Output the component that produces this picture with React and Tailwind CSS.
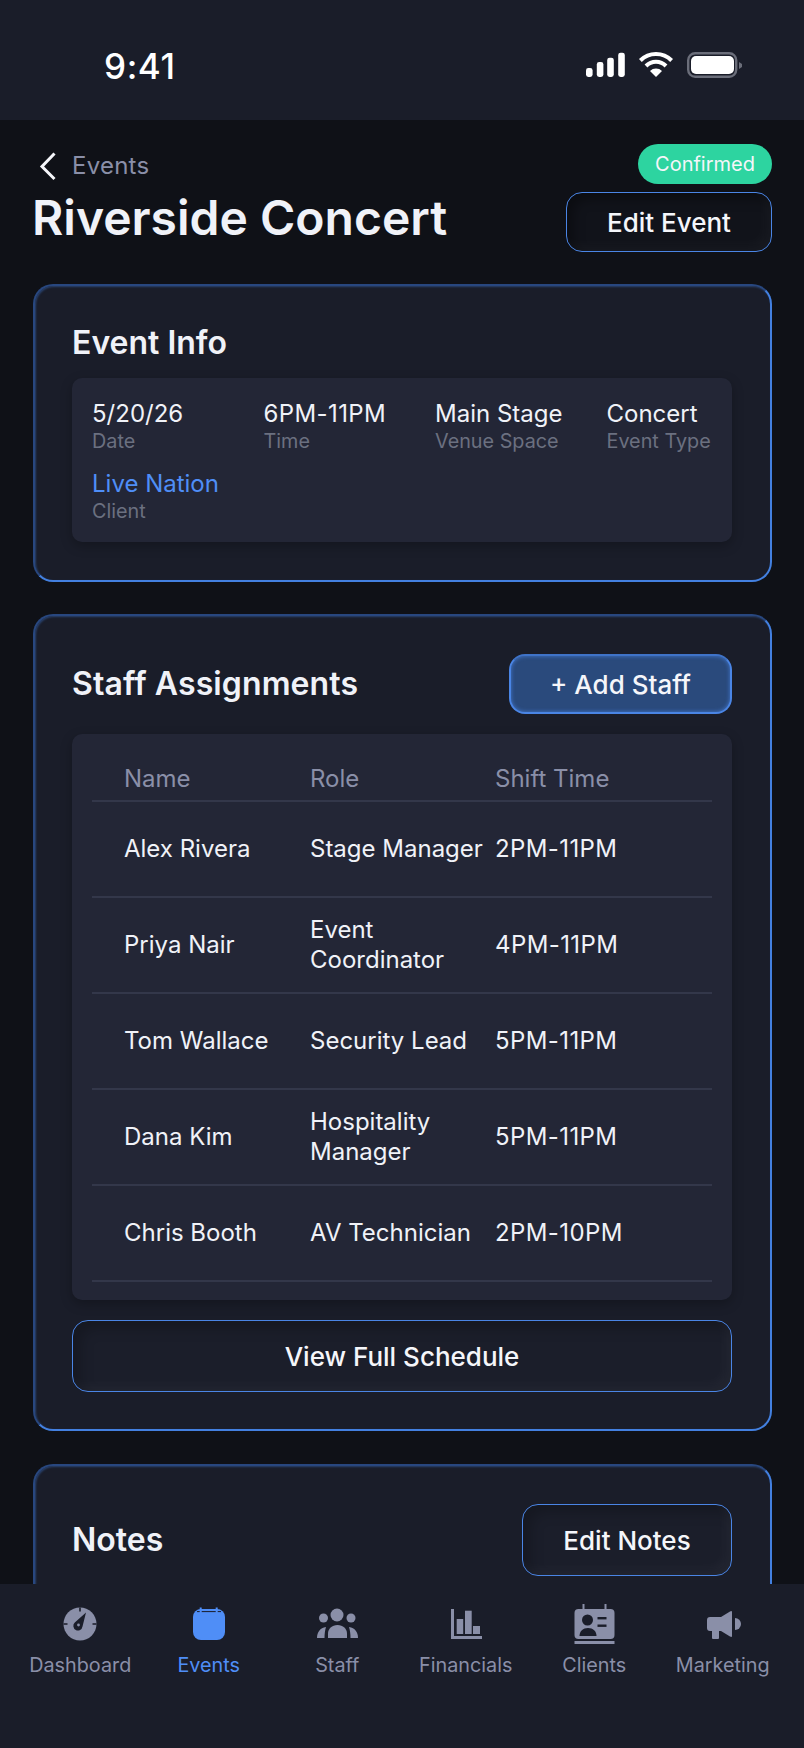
const Value = ({ v, l, blue, time }) => (
  <div>
    <div className={`pt-[1px] text-2xl leading-[29px] ${time ? "tracking-[0.4px]" : ""} ${blue ? "text-[#4f8ef7]" : "text-[#f0f2f8]"}`}>{v}</div>
    <div className="text-[19.8px] leading-[26px] text-[#6b7080]">{l}</div>
  </div>
);

const rows = [
  ["Alex Rivera", "Stage Manager", "2PM-11PM"],
  ["Priya Nair", "Event Coordinator", "4PM-11PM"],
  ["Tom Wallace", "Security Lead", "5PM-11PM"],
  ["Dana Kim", "Hospitality Manager", "5PM-11PM"],
  ["Chris Booth", "AV Technician", "2PM-10PM"],
];

const cardCls =
  "rounded-[20px] border-2 border-[#4380e0] border-t-[#28477f] border-l-[#28477f] bg-[#1a1d29] pl-[37px] pr-[38px] shadow-[inset_1px_1px_2px_rgba(60,110,190,0.45)]";
const ghostBtn =
  "flex items-center justify-center rounded-[16px] border-[1.5px] border-[#4a85e5] text-[26px] font-medium text-[#f5f6fa]";
const darkBtn =
  "bg-[#11131a] shadow-[inset_6px_6px_12px_rgba(0,0,0,0.35),inset_-6px_-6px_12px_rgba(255,255,255,0.03)]";
const softBtn =
  "bg-[#1b1e2a] shadow-[inset_7px_7px_14px_rgba(0,0,0,0.22),inset_-6px_-6px_12px_rgba(255,255,255,0.035)]";

const I = { f: "#8a8fa8", d: "#1a1d29", a: "#4f8ef7" };

const icons = {
  dashboard: (
    <>
      <circle cx="24" cy="20" r="16.5" fill={I.f} />
      <path d="M24 3.5V7.5M7.5 20H11.5M36.5 20H40.5" stroke={I.d} strokeWidth="1.6" />
      <path d="M30 8.5L26.5 22.5A4.6 4.6 0 1 1 18.8 18.5Z" fill={I.d} />
      <circle cx="22.5" cy="21" r="1.4" fill={I.f} />
    </>
  ),
  events: (
    <>
      <rect x="8" y="5" width="32" height="31" rx="8" fill={I.a} />
      <path d="M12 7.6H36" stroke={I.d} strokeWidth="1" />
      <path d="M15.7 3.5V9M31.7 3.5V9" stroke={I.a} strokeWidth="2" />
    </>
  ),
  staff: (
    <g fill={I.f}>
      <circle cx="24" cy="11" r="6.5" />
      <circle cx="10.5" cy="14" r="4.5" />
      <circle cx="38" cy="14" r="4.5" />
      <path d="M15 34V29.5C15 25 19 21 24.5 21C30 21 34 25 34 29.5V34Z" />
      <path d="M4 34C4 28 7 24 13 23C12 26 11.5 30 11.5 34Z" />
      <path d="M45 34C45 28 42 24 36 23C37 26 37.5 30 37.5 34Z" />
    </g>
  ),
  financials: (
    <g fill={I.f}>
      <rect x="9" y="5" width="3" height="30" />
      <rect x="9" y="32" width="31" height="3" />
      <rect x="14.7" y="15" width="6.5" height="15" />
      <rect x="23" y="6.7" width="6.7" height="23.3" />
      <rect x="31" y="22" width="7" height="8" />
    </g>
  ),
  clients: (
    <>
      <rect x="4.5" y="5" width="40" height="30" rx="4" fill={I.f} />
      <rect x="12.5" y="0" width="2" height="6" fill={I.f} />
      <rect x="34.5" y="0" width="2" height="6" fill={I.f} />
      <rect x="4.5" y="37" width="40" height="3" fill={I.f} />
      <circle cx="17.5" cy="16" r="5.5" fill={I.d} />
      <path d="M9.5 32C9.5 27 13 24 18 24C23 24 26.5 27 26.5 32Z" fill={I.d} />
      <rect x="27.5" y="13" width="9" height="2.4" fill={I.d} />
      <rect x="27.5" y="20.5" width="9" height="2.4" fill={I.d} />
    </>
  ),
  marketing: (
    <g fill={I.f}>
      <path d="M11 13H22L31 7.5Q33 6.5 33 8V32Q33 33.5 31 32.5L22 27H11Q8 27 8 24V16Q8 13 11 13Z" />
      <rect x="13" y="26" width="7" height="9" rx="1" />
      <path d="M36 14A6 6 0 0 1 36 26Z" />
    </g>
  ),
};

const nav = [
  ["Dashboard", "dashboard"],
  ["Events", "events", true],
  ["Staff", "staff"],
  ["Financials", "financials"],
  ["Clients", "clients"],
  ["Marketing", "marketing"],
];

export default function App() {
  return (
    <div className="flex h-[1748px] w-[804px] flex-col overflow-hidden bg-[#0f1117] [font-family:Inter,sans-serif]">
      {/* status bar */}
      <div className="flex h-[120px] shrink-0 items-start justify-between bg-[#1a1d29] pl-[104px] pr-[62px] pt-[44px]">
        <span className="text-[35px] font-medium leading-[44px] tracking-[0.6px] text-white">9:41</span>
        <svg width="156" height="28" viewBox="586 51 156 28" className="mt-[7px] block">
          <g fill="#fff">
            <rect x="586" y="68" width="6.6" height="9" rx="2.4" />
            <rect x="596.8" y="62" width="6.6" height="15" rx="2.4" />
            <rect x="607.2" y="57.7" width="6.6" height="19.3" rx="2.4" />
            <rect x="618.2" y="52.7" width="6.6" height="24.3" rx="2.4" />
            <path d="M656 77L650 71A8.5 8.5 0 0 1 662 71Z" />
          </g>
          <path d="M640.4 60.5A22 22 0 0 1 671.6 60.5M646 66A14 14 0 0 1 666 66" stroke="#fff" strokeWidth="4" fill="none" />
          <rect x="688.2" y="53.2" width="48" height="23.6" rx="7" fill="none" stroke="#6b6e7a" strokeWidth="2.4" />
          <rect x="691" y="56" width="43" height="18" rx="5" fill="#fff" />
          <path d="M739 62L742 64V67L739 69Z" fill="#6b6e7a" />
        </svg>
      </div>

      {/* scrolling content */}
      <div className="min-h-0 flex-1 overflow-hidden pl-[33px] pr-[32px] pt-[24px]">
        <div className="flex justify-between">
          <div>
            <div className="flex h-[40px] items-center pt-[4px]">
              <svg width="24" height="30" viewBox="0 0 24 30" className="ml-[3px] mr-[12px] block">
                <path d="M18.5 2.5L6 15.5L18.5 28" fill="none" stroke="#f5f6fa" strokeWidth="3" />
              </svg>
              <span className="text-2xl tracking-[0.25px] text-[#8a8fa8]">Events</span>
            </div>
            <h1 className="-ml-[1px] mt-[6px] text-[48px] font-semibold leading-[56px] text-[#f0f2f8]">Riverside Concert</h1>
          </div>
          <div className="flex flex-col items-end gap-2">
            <span className="flex h-[40px] w-[134px] items-center justify-center rounded-full bg-[#2dd4a0] text-xl text-[#f5f6fa]">Confirmed</span>
            <button className={`${ghostBtn} ${darkBtn} h-[60px] w-[206px]`}>Edit Event</button>
          </div>
        </div>

        <div className="mt-[32px] flex flex-col">
          <section className={`${cardCls} pb-[38px] pt-[37px]`}>
            <h2 className="text-[32px] font-semibold leading-[40px] text-[#f0f2f8]">Event Info</h2>
            <div className="mt-[15px] grid grid-cols-[repeat(4,171.5px)] gap-y-[14px] overflow-hidden rounded-[10px] bg-[#232636] pb-[18px] pl-[20px] pt-[20px] shadow-[0_4px_12px_rgba(0,0,0,0.25)]">
              <Value v="5/20/26" l="Date" />
              <Value v="6PM-11PM" l="Time" time />
              <Value v="Main Stage" l="Venue Space" />
              <Value v="Concert" l="Event Type" />
              <Value v="Live Nation" l="Client" blue />
            </div>
          </section>

          <section className={`${cardCls} mt-[32px] pb-[37px] pt-[38px]`}>
            <div className="flex items-center justify-between">
              <h2 className="text-[32px] font-semibold leading-[40px] tracking-[0.1px] text-[#f0f2f8]">Staff Assignments</h2>
              <button className="flex h-[60px] w-[223px] items-center justify-center rounded-[16px] border-2 border-[#4a85e5] border-t-[#3f73c8] bg-[#2a4a7c] text-[26px] font-medium text-[#f5f6fa] shadow-[inset_0_0_4px_rgba(74,133,229,0.8)]">+ Add Staff</button>
            </div>
            <div className="mt-[20px] rounded-[10px] bg-[#232636] px-[20px] pb-[18px] pt-[20px] shadow-[0_4px_12px_rgba(0,0,0,0.25)]">
              <div className="grid h-[48px] grid-cols-[218px_185px_1fr] items-center border-b-2 border-[#33374a] pt-[3px] text-2xl text-[#8a8fa8]">
                <span className="pl-[32px]">Name</span>
                <span>Role</span>
                <span>Shift Time</span>
              </div>
              {rows.map((r) => (
                <div key={r[0]} className="grid h-[96px] grid-cols-[218px_185px_1fr] items-center border-b-2 border-[#33374a] text-2xl leading-[30px] text-[#f0f2f8]">
                  <span className="pl-[32px]">{r[0]}</span>
                  <span>{r[1]}</span>
                  <span className="tracking-[0.4px]">{r[2]}</span>
                </div>
              ))}
            </div>
            <button className={`${ghostBtn} ${softBtn} mt-[20px] h-[72px] w-full`}>View Full Schedule</button>
          </section>

          <section className={`${cardCls} mt-[33px] pb-[37px] pt-[38px]`}>
            <div className="flex items-center justify-between">
              <h2 className="text-[32px] font-semibold leading-[40px] text-[#f0f2f8]">Notes</h2>
              <button className={`${ghostBtn} ${softBtn} h-[72px] w-[210px]`}>Edit Notes</button>
            </div>
          </section>
        </div>
      </div>

      {/* bottom nav */}
      <nav className="h-[164px] shrink-0 bg-[#1a1d29] pl-[16px] pt-[20px]">
        <div className="grid w-[771px] grid-cols-6">
          {nav.map(([label, key, active]) => (
            <div key={label} className="flex flex-col items-center">
              <svg width="48" height="44" viewBox="0 0 48 44" className="block">{icons[key]}</svg>
              <span className={`mt-[5px] text-[19.8px] leading-[24px] ${active ? "text-[#4f8ef7]" : "text-[#8a8fa8]"}`}>{label}</span>
            </div>
          ))}
        </div>
      </nav>
    </div>
  );
}
